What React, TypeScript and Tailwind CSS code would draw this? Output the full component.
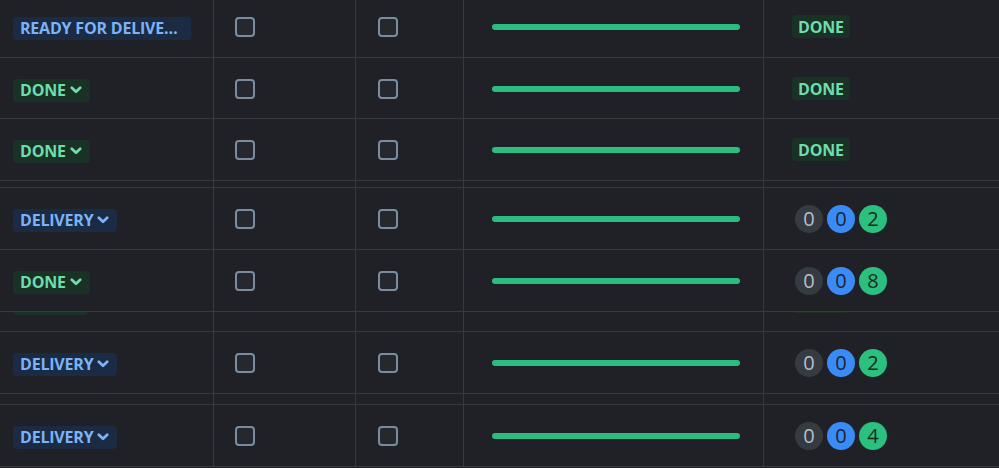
import React from "react";

type Status = "DONE" | "DELIVERY" | "READY FOR DELIVERY";
type Row = {
  status: Status;
  result: "DONE" | [number, number, number];
  h: string;
  clip?: boolean;
};

const rows: (Row | { gap: string })[] = [
  { status: "READY FOR DELIVERY", result: "DONE", h: "h-[62px]" },
  { status: "DONE", result: "DONE", h: "h-[61px]" },
  { status: "DONE", result: "DONE", h: "h-[62px]" },
  { gap: "h-[7px]" },
  { status: "DELIVERY", result: [0, 0, 2], h: "h-[62px]" },
  { status: "DONE", result: [0, 0, 8], h: "h-[62px]" },
  { status: "DONE", result: "DONE", h: "h-[20px]", clip: true },
  { status: "DELIVERY", result: [0, 0, 2], h: "h-[62px]" },
  { gap: "h-[11px]" },
  { status: "DELIVERY", result: [0, 0, 4], h: "h-[62px]" },
];

const line = "border-[#363a3f]";

const Chevron = () => (
  <svg width="12" height="8" viewBox="0 0 12 8" className="ml-[4px] shrink-0">
    <path d="M1.8 1.8 L6 5.8 L10.2 1.8" fill="none" stroke="currentColor" strokeWidth="2.7" strokeLinecap="round" strokeLinejoin="round" />
  </svg>
);

const StatusBadge = ({ status }: { status: Status }) => {
  const blue = status !== "DONE";
  const color = blue ? "bg-[#1b2b44] text-[#7ab3f7]" : "bg-[#1a3126] text-[#6fdcab]";
  if (status === "READY FOR DELIVERY") {
    return (
      <span className={`inline-flex h-[23px] max-w-[178px] items-center rounded-[4px] pl-[7px] pr-[11px] text-[16px] font-bold leading-none tracking-[-0.2px] ${color}`}>
        <span className="truncate">{status}</span>
      </span>
    );
  }
  return (
    <span className={`inline-flex h-[23px] items-center rounded-[4px] pl-[7px] pr-[8px] text-[16px] font-bold leading-none tracking-[-0.2px] ${color}`}>
      {status}
      <Chevron />
    </span>
  );
};

const Checkbox = () => (
  <span className="block h-[20px] w-[20px] rounded-[4px] border-2 border-[#7b8ba0] bg-[#25292e]" />
);

const Counts = ({ v }: { v: [number, number, number] }) => (
  <div className="flex gap-[4px] pl-[3px] text-[20px] leading-none">
    <span className="flex h-[28px] w-[28px] items-center justify-center rounded-full bg-[#363b41] text-[#b7bfca]">{v[0]}</span>
    <span className="flex h-[28px] w-[28px] items-center justify-center rounded-full bg-[#3b8bf6] text-[#1b2433]">{v[1]}</span>
    <span className="flex h-[28px] w-[28px] items-center justify-center rounded-full bg-[#2bbf80] text-[#1a2a23]">{v[2]}</span>
  </div>
);

// row cut off by the row after it: only the bottom edge of its badges shows
const ClippedCells = () => (
  <div className="grid h-[61px] shrink-0 grid-cols-[214px_142px_108px_300px_1fr]">
    <div className={`flex items-center border-r ${line} pl-[13px] pt-[3px]`}>
      <span className="block h-[23px] w-[75px] rounded-[4px] bg-[#1a3126]" />
    </div>
    <div className={`border-r ${line}`} />
    <div className={`border-r ${line}`} />
    <div className={`border-r ${line}`} />
    <div className="flex items-center pl-[28px]">
      <span className="block h-[23px] w-[57px] rounded-[4px] bg-[#1a3126]" />
    </div>
  </div>
);

const Cells = ({ r }: { r: Row }) => (
  <div className="grid h-[61px] shrink-0 grid-cols-[214px_142px_108px_300px_1fr]">
    <div className={`flex items-center border-r ${line} pl-[13px] pt-[3px]`}>
      <StatusBadge status={r.status} />
    </div>
    <div className={`flex items-center border-r ${line} pl-[21px]`}>
      <Checkbox />
    </div>
    <div className={`flex items-center border-r ${line} pl-[22px]`}>
      <Checkbox />
    </div>
    <div className={`flex items-center border-r ${line} pl-[28px]`}>
      <div className="h-[6px] w-[248px] rounded-full bg-[#2bbd7f]" />
    </div>
    <div className="flex items-center pl-[28px]">
      {r.result === "DONE" ? (
        <span className="inline-flex h-[23px] items-center rounded-[4px] px-[6px] text-[16px] font-bold leading-none tracking-[-0.2px] bg-[#1a3126] text-[#6fdcab]">
          DONE
        </span>
      ) : (
        <Counts v={r.result} />
      )}
    </div>
  </div>
);

export default function App() {
  return (
    <div
      className="h-[468px] w-[999px] overflow-hidden bg-[#1f2126]"
      style={{ fontFamily: "'Open Sans', 'Noto Sans', sans-serif" }}
    >
      <div className="mt-[-4px] flex flex-col">
        {rows.map((r, i) =>
          "gap" in r ? (
            <div key={i} className={`grid grid-cols-[214px_142px_108px_300px_1fr] border-b ${line} ${r.gap}`}>
              <div className={`border-r ${line}`} />
              <div className={`border-r ${line}`} />
              <div className={`border-r ${line}`} />
              <div className={`border-r ${line}`} />
              <div />
            </div>
          ) : (
            <div key={i} className={`flex flex-col overflow-hidden border-b ${line} ${r.h}`}>
              {r.clip ? (
                <div className="mt-[-41px] flex flex-col">
                  <ClippedCells />
                </div>
              ) : (
                <Cells r={r} />
              )}
            </div>
          )
        )}
      </div>
    </div>
  );
}
